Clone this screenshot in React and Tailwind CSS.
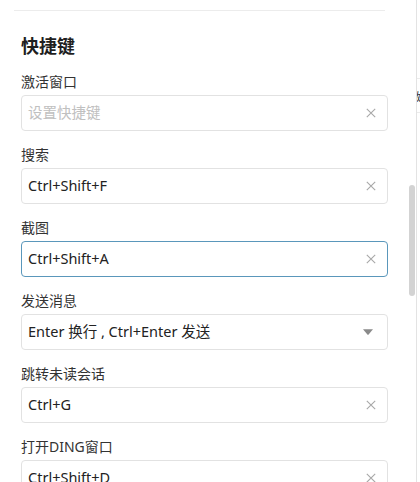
import React from 'react';

const font = { fontFamily: '"Noto Sans", "Noto Sans CJK SC", sans-serif' };

const ClearIcon = () => (
  <svg width="10" height="10" viewBox="0 0 10 10" className="text-[#a8a8a8]">
    <path d="M0.8 0.8 L9.2 9.2 M9.2 0.8 L0.8 9.2" stroke="currentColor" strokeWidth="1.1" fill="none" />
  </svg>
);

const Caret = () => (
  <svg width="12" height="8" viewBox="0 0 12 8" className="text-[#8a8a8a]">
    <path d="M1 1.2 L11 1.2 L6.6 6.6 Q6 7.2 5.4 6.6 Z" fill="currentColor" />
  </svg>
);

const ShortcutField = ({ label, value, placeholder, focused }) => (
  <div className="mb-[13px]">
    <div className="h-[22px] mb-[2px] text-[14px] leading-[22px] text-[#333]">{label}</div>
    <div
      className={`flex items-center h-[36px] pl-[6px] pr-[11px] rounded-[4px] border ${
        focused ? 'border-[#5a97bb]' : 'border-[#e2e2e2]'
      }`}
    >
      <span className={`flex-1 text-[14.5px] ${value ? 'text-[#222]' : 'text-[#c0c0c0]'}`}>
        {value || placeholder}
      </span>
      <ClearIcon />
    </div>
  </div>
);

const fields = [
  { label: '激活窗口', value: '', placeholder: '设置快捷键' },
  { label: '搜索', value: 'Ctrl+Shift+F' },
  { label: '截图', value: 'Ctrl+Shift+A', focused: true },
];

const fieldsAfter = [
  { label: '跳转未读会话', value: 'Ctrl+G' },
  { label: '打开DING窗口', value: 'Ctrl+Shift+D' },
];

export default function App() {
  return (
    <div className="flex w-[420px] h-[482px] overflow-hidden bg-white" style={font}>
      <div className="w-[409px] shrink-0 overflow-hidden">
        <div className="ml-[14px] w-[371px] h-px bg-[#ececec] mt-[10px]" />
        <div className="pl-[21px] w-[388px]">
          <h2 className="mt-[22px] mb-[12px] text-[18px] leading-[26px] font-bold text-[#1f1f1f]">快捷键</h2>
          {fields.map((f) => (
            <ShortcutField key={f.label} {...f} />
          ))}
          <div className="mb-[13px]">
            <div className="h-[22px] mb-[2px] text-[14px] leading-[22px] text-[#333]">发送消息</div>
            <div className="flex items-center h-[36px] pl-[6px] pr-[13px] rounded-[4px] border border-[#e2e2e2]">
              <span className="flex-1 text-[14.5px] text-[#222]">Enter 换行 , Ctrl+Enter 发送</span>
              <Caret />
            </div>
          </div>
          {fieldsAfter.map((f) => (
            <ShortcutField key={f.label} {...f} />
          ))}
        </div>
      </div>
      <div className="w-[7px] shrink-0 pt-[185px]">
        <div className="h-[111px] w-[6px] rounded-[3px] bg-[#d3d3d3]" />
      </div>
      <div className="w-[4px] min-w-0 shrink-0 overflow-hidden border-l border-[#e3e3e3] flex flex-col">
        <div className="h-[78px]" />
        <div className="h-[35px] border-y border-[#ececec] text-[11px] leading-[35px] text-[#333] whitespace-nowrap -ml-[7px]">激</div>
      </div>
    </div>
  );
}
